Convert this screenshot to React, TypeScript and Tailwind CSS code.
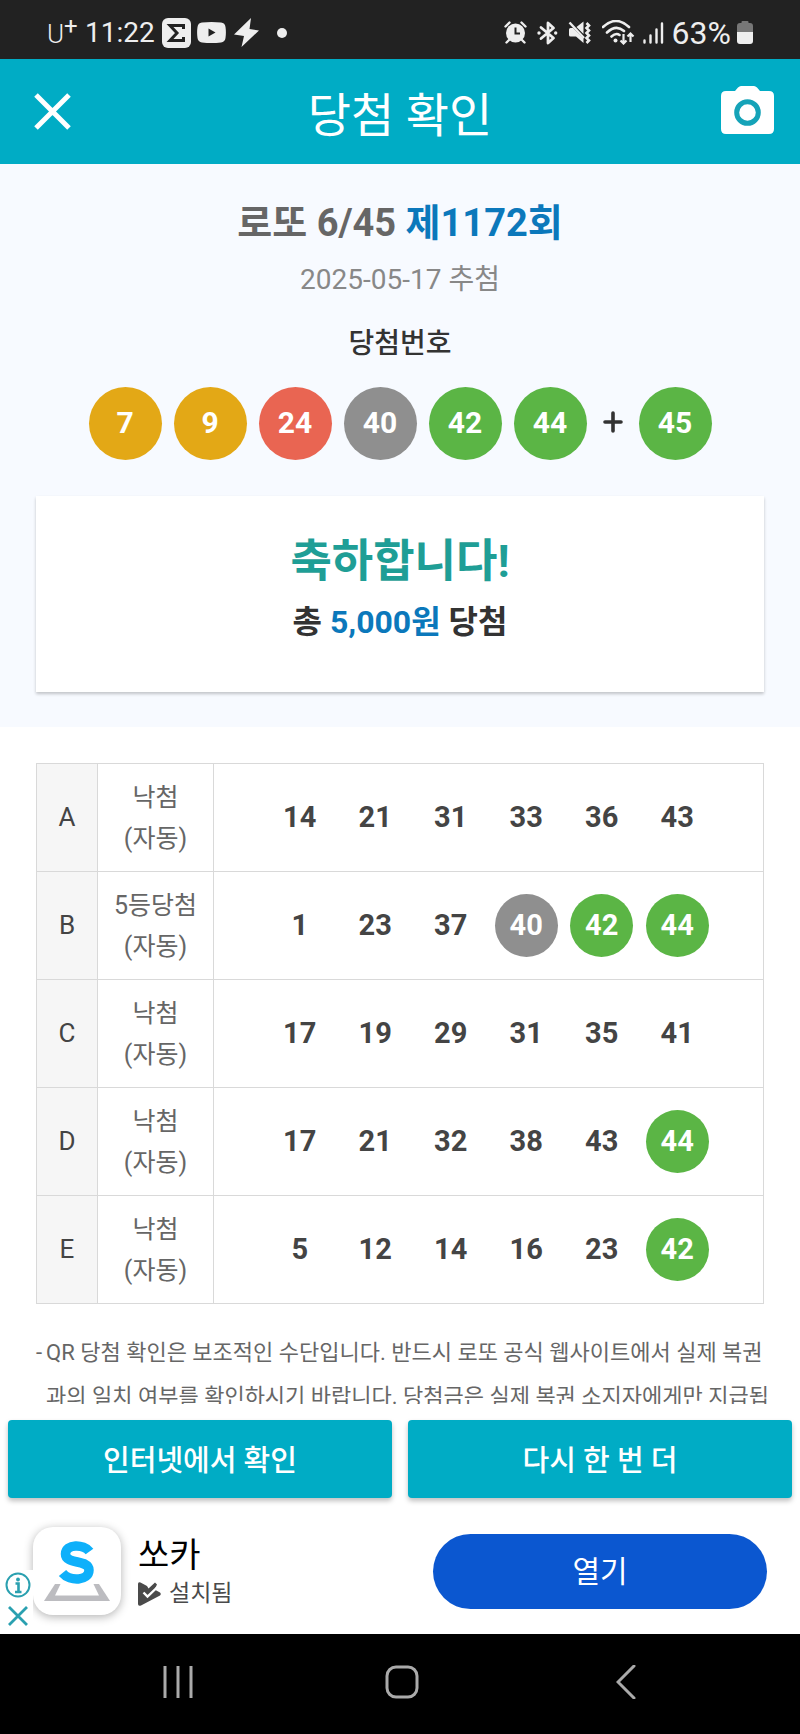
import React from "react";
import { clsx } from "clsx";

type BallColor = "yellow" | "red" | "gray" | "green";

const ballColors: Record<BallColor, string> = {
  yellow: "bg-[#e3a816]",
  red: "bg-[#e96552]",
  gray: "bg-[#8f8f8f]",
  green: "bg-[#5bb545]",
};

const colorOf = (n: number): BallColor => {
  if (n <= 10) return "yellow";
  if (n <= 30) return "red";
  if (n <= 40) return "gray";
  return "green";
};

const winning = [7, 9, 24, 40, 42, 44];
const bonus = 45;

interface Game {
  id: string;
  result: string;
  numbers: number[];
}

const games: Game[] = [
  { id: "A", result: "낙첨", numbers: [14, 21, 31, 33, 36, 43] },
  { id: "B", result: "5등당첨", numbers: [1, 23, 37, 40, 42, 44] },
  { id: "C", result: "낙첨", numbers: [17, 19, 29, 31, 35, 41] },
  { id: "D", result: "낙첨", numbers: [17, 21, 32, 38, 43, 44] },
  { id: "E", result: "낙첨", numbers: [5, 12, 14, 16, 23, 42] },
];

const StatusBar = () => (
  <div className="flex h-[59px] shrink-0 items-center justify-between bg-[#222222] pl-[47px] pr-[47px] pt-1.5 text-[#eeeeee]">
    <div className="flex items-center">
      <span className="flex w-[38px] pt-0.5 text-[26px] leading-8">
        <span className="font-light">U</span>
        <sup className="top-0 text-[24px] leading-4">+</sup>
      </span>
      <span className="w-[77px] text-[28px] leading-8">11:22</span>
      <svg width="29" height="30" viewBox="0 0 29 30">
        <rect width="29" height="30" rx="6" fill="#eeeeee" />
        <path
          d="M21.500 11V7.500H8L15 15L8 22.500H21.500V19"
          fill="none"
          stroke="#222222"
          strokeWidth="3"
        />
      </svg>
      <svg className="ml-1.5" width="29" height="21" viewBox="0 0 29 21">
        <path
          d="M5 .6Q14.500-.4 24 .6Q28 1 28.500 5Q29.300 10.500 28.500 16Q28 20 24 20.400Q14.500 21.400 5 20.400Q1 20 .5 16Q-.3 10.500 .5 5Q1 1 5 .6Z"
          fill="#eeeeee"
        />
        <path d="M11.500 6.500L18.500 10.500L11.500 14.500Z" fill="#222222" />
      </svg>
      <svg className="ml-2" width="25" height="29" viewBox="0 0 25 29">
        <path d="M17 0L0 16.500L10 18L7.500 29L25 12.500L15.500 11Z" fill="#eeeeee" />
      </svg>
      <span className="ml-[18px] size-[10px] rounded-full bg-[#eeeeee]" />
    </div>

    <div className="flex items-center">
      <svg width="23" height="23" viewBox="0 0 23 23">
        <circle cx="11.500" cy="12" r="9.500" fill="#eeeeee" />
        <path
          d="M1.500 5.500L5.500 1.500M21.500 5.500L17.500 1.500M5 19L2.500 21.500M18 19L20.500 21.500"
          stroke="#eeeeee"
          strokeWidth="2.400"
          strokeLinecap="round"
        />
        <path d="M11.500 6.500V12.500H16" fill="none" stroke="#222222" strokeWidth="2" />
      </svg>
      <svg className="ml-2.5" width="21" height="24" viewBox="0 0 21 24">
        <path
          d="M4 6.500L16.500 17L11 22V2L16.500 7L4 17.500"
          fill="none"
          stroke="#eeeeee"
          strokeWidth="2.800"
          strokeLinejoin="round"
          strokeLinecap="round"
        />
        <circle cx="2" cy="12" r="1.700" fill="#eeeeee" />
        <circle cx="18.700" cy="12" r="1.700" fill="#eeeeee" />
      </svg>
      <svg className="ml-2.5" width="24" height="23" viewBox="0 0 24 23">
        <path
          d="M1 8.500Q1 7 2.500 7H5L15.500 17.500V22L8 15.500H2.500Q1 15.500 1 14ZM8.500 6L15.500 .5V13Z"
          fill="#eeeeee"
        />
        <path d="M1.500 1.500L16 17" stroke="#eeeeee" strokeWidth="2.400" />
        <path
          d="M18.500 2L21 4.500L18.500 7L21 9.500L18.500 12L21 14.500L18.500 17L21 19.500L18.500 22"
          fill="none"
          stroke="#eeeeee"
          strokeWidth="2.600"
        />
      </svg>
      <svg className="ml-2.5" width="33" height="25" viewBox="0 0 33 25">
        <path
          d="M1 7Q14-5 27 7M5 12.500Q14 4 22 11M9.500 16.500Q14 12.500 17.500 15"
          fill="none"
          stroke="#eeeeee"
          strokeWidth="2.600"
          strokeLinecap="round"
        />
        <circle cx="13.500" cy="20.500" r="2" fill="#eeeeee" />
        <path
          d="M21.500 14V23M18.500 20.500L21.500 23.500L24.500 20.500M28.500 22V14M25.500 16.500L28.500 13.500L31.500 16.500"
          fill="none"
          stroke="#eeeeee"
          strokeWidth="2.200"
        />
      </svg>
      <svg className="ml-2" width="21" height="22" viewBox="0 0 21 22">
        <path
          d="M1.500 18.500V20.500M7.500 13.500V20.500M13.500 7.500V20.500M19 1.500V20.500"
          stroke="#eeeeee"
          strokeWidth="2.400"
          strokeLinecap="round"
        />
      </svg>
      <span className="ml-2 text-[32px] leading-8">63%</span>
      <svg className="ml-1.5" width="16" height="23" viewBox="0 0 16 23">
        <path
          d="M4.500 2V1Q4.500 0 5.500 0H10.500Q11.500 0 11.500 1V2H13Q16 2 16 5V11H0V5Q0 2 3 2Z"
          fill="#777777"
        />
        <path d="M0 11H16V20Q16 23 13 23H3Q0 23 0 20Z" fill="#eeeeee" />
      </svg>
    </div>
  </div>
);

const Header = () => (
  <header className="flex h-[105px] shrink-0 items-center justify-between bg-[#00acc5] px-[26px] text-white">
    <button type="button" aria-label="닫기" className="w-[53px] pl-2">
      <svg width="37" height="37" viewBox="0 0 37 37">
        <path d="M2 2L35 35M35 2L2 35" stroke="white" strokeWidth="5" />
      </svg>
    </button>
    <h1 className="pt-2 text-[47px] leading-[56px]">당첨 확인</h1>
    <button type="button" aria-label="카메라" className="pb-1">
      <svg width="53" height="48" viewBox="0 0 53 48">
        <path
          d="M5 5H14L17 1.500Q18.500 0 20 0H33Q34.500 0 36 1.500L39 5H48Q53 5 53 10V43Q53 48 48 48H5Q0 48 0 43V10Q0 5 5 5Z"
          fill="white"
        />
        <circle cx="26.500" cy="26.500" r="10.800" fill="none" stroke="#15a3b8" strokeWidth="5" />
      </svg>
    </button>
  </header>
);

const Ball = ({ value }: { value: number }) => (
  <span
    className={clsx(
      "flex size-[73px] items-center justify-center rounded-full pb-0.5 text-[30px] font-bold text-white",
      ballColors[colorOf(value)],
    )}
  >
    {value}
  </span>
);

const Summary = () => (
  <section className="bg-[#f7faff] px-9 pb-[35px] pt-[35px] text-center">
    <h2 className="text-[38px] font-bold leading-[48px] text-[#666666]">
      로또 6/45 <span className="text-[#0b78bb]">제1172회</span>
    </h2>
    <p className="mt-[13px] text-[28px] leading-10 text-[#888888]">2025-05-17 추첨</p>
    <p className="mt-6 text-[28px] font-medium leading-10 text-[#333333]">당첨번호</p>
    <div className="mt-[23px] flex items-center justify-center gap-3">
      {winning.map((n) => (
        <Ball key={n} value={n} />
      ))}
      <svg className="mx-1 mb-1" width="20" height="22" viewBox="0 0 20 22">
        <path
          d="M10 2V20M2 11H18"
          stroke="#333333"
          strokeWidth="3.600"
          strokeLinecap="round"
        />
      </svg>
      <Ball value={bonus} />
    </div>

    <div className="mt-9 bg-white pb-[50px] pt-[38px] shadow-[0_2px_3px_rgba(0,0,0,0.22)]">
      <p className="text-[45px] font-bold leading-[56px] text-[#1f9e96]">축하합니다!</p>
      <p className="mt-3 text-[32px] font-bold leading-10 text-[#333333]">
        총 <span className="text-[#0b78bb]">5,000원</span> 당첨
      </p>
    </div>
  </section>
);

const GameRow = ({ game }: { game: Game }) => {
  const drawn = [...winning, bonus];
  return (
    <tr className="h-[108px]">
      <th scope="row" className="border border-[#d9d9d9] bg-[#f6f6f6] text-[26px] font-normal text-[#444444]">
        {game.id}
      </th>
      <td className="border border-[#d9d9d9] text-[25px] leading-[41px] text-[#666666]">
        {game.result}
        <br />
        (자동)
      </td>
      <td className="border border-[#d9d9d9]">
        <div className="mx-auto grid max-w-[453px] grid-cols-6 place-items-center">
          {game.numbers.map((n) => (
            <span
              key={n}
              className={clsx(
                "flex size-[63px] items-center justify-center rounded-full text-[29px] font-bold",
                drawn.includes(n) ? ["text-white", ballColors[colorOf(n)]] : "text-[#444444]",
              )}
            >
              {n}
            </span>
          ))}
        </div>
      </td>
    </tr>
  );
};

const Actions = () => (
  <div className="grid shrink-0 grid-cols-2 gap-4 bg-white px-2 pt-4 text-[29px] font-medium text-white">
    <button type="button" className="h-[78px] rounded bg-[#00acc5] pt-1.5 shadow-[0_3px_5px_rgba(0,0,0,0.25)]">
      인터넷에서 확인
    </button>
    <button type="button" className="h-[78px] rounded bg-[#00acc5] pt-1.5 shadow-[0_3px_5px_rgba(0,0,0,0.25)]">
      다시 한 번 더
    </button>
  </div>
);

const AdBanner = () => (
  <aside className="relative flex h-[136px] shrink-0 items-center px-[33px] pt-2.5">
    <div className="flex size-[88px] shrink-0 items-center justify-center rounded-[20px] bg-white shadow-[0_2px_10px_rgba(0,0,0,0.3)]">
      <svg width="66" height="60" viewBox="0 0 66 60">
        <path d="M11 43H55L66 60H0Z" fill="#bcbcc0" />
        <path d="M17 42H49L55 54.500H11Z" fill="white" />
        <path
          d="M45.500 10.500C40 3 21.500 2.500 21.500 13C21.500 24 45 18 45 29C45 40 26 41 18.500 32"
          fill="none"
          stroke="#0eb0fa"
          strokeWidth="9.500"
        />
      </svg>
    </div>
    <div className="ml-[17px] flex-1 pt-1.5">
      <p className="text-[34px] leading-10 text-black">쏘카</p>
      <p className="flex items-center gap-2 text-[23px] leading-[38px] text-[#4a4a4a]">
        <svg width="23" height="24" viewBox="0 0 23 24">
          <path
            d="M0 2Q0-.5 2.500 .5L9 4L10.500 6.500L17 .5L19 2.500L16.500 7.500L22 10.500Q23.500 12 22 13.500L3 23.500Q0 24.500 0 22Z"
            fill="#4a4a4a"
          />
          <path
            d="M5.500 10.500L9.500 14.500L19 5.500"
            fill="none"
            stroke="white"
            strokeWidth="2.400"
          />
        </svg>
        설치됨
      </p>
    </div>
    <button type="button" className="h-[75px] w-[334px] rounded-full bg-[#0b57d0] text-[30px] text-white">
      열기
    </button>

    {/* ad choices, over the icon's shadow */}
    <div className="absolute bottom-1 left-0 flex w-[33px] flex-col items-center gap-2 bg-white pb-1 pl-0.5 pt-0.5">
      <button type="button" aria-label="광고 정보">
        <svg width="26" height="26" viewBox="0 0 26 26">
          <circle cx="13" cy="13" r="11.500" fill="none" stroke="#2aa0b0" strokeWidth="2" />
          <circle cx="13" cy="7.500" r="1.900" fill="#2aa0b0" />
          <path d="M10.500 11.500H13.500V20M10 20H16.500" fill="none" stroke="#2aa0b0" strokeWidth="2.600" />
        </svg>
      </button>
      <button type="button" aria-label="광고 닫기">
        <svg width="20" height="20" viewBox="0 0 20 20">
          <path d="M1 1L19 19M19 1L1 19" stroke="#2aa0b0" strokeWidth="2.800" />
        </svg>
      </button>
    </div>
  </aside>
);

const NavBar = () => (
  <nav className="grid h-[100px] shrink-0 grid-cols-3 place-items-center bg-black pb-1 pl-[66px] pr-[62px]">
    <button type="button" aria-label="최근 앱">
      <svg width="32" height="34" viewBox="0 0 32 34" stroke="#aaaaaa" strokeWidth="3">
        <path d="M3 1V33M16 1V33M29 1V33" />
      </svg>
    </button>
    <button type="button" aria-label="홈">
      <svg width="34" height="34" viewBox="0 0 34 34" fill="none" stroke="#aaaaaa" strokeWidth="3">
        <rect x="2" y="2" width="30" height="30" rx="9" />
      </svg>
    </button>
    <button type="button" aria-label="뒤로">
      <svg width="20" height="34" viewBox="0 0 20 34" fill="none" stroke="#aaaaaa" strokeWidth="3">
        <path d="M18 1L2 17L18 33" strokeLinecap="round" />
      </svg>
    </button>
  </nav>
);

export default function App() {
  return (
    <div className="flex h-screen flex-col bg-white font-[Roboto,'Noto_Sans_CJK_KR',sans-serif]" lang="ko">
      <StatusBar />
      <Header />
      <main className="min-h-0 flex-1 overflow-y-auto [scrollbar-width:none]">
        <Summary />
        <div className="px-9 pt-9">
          <table className="w-full table-fixed border-collapse text-center">
            <colgroup>
              <col className="w-[61px]" />
              <col className="w-[116px]" />
              <col />
            </colgroup>
            <tbody>
              {games.map((game) => (
                <GameRow key={game.id} game={game} />
              ))}
            </tbody>
          </table>
          <div className="mt-[27px] flex gap-1 text-[22px] leading-[44px] text-[#666666]">
            <span>-</span>
            <p className="whitespace-nowrap">
              QR 당첨 확인은 보조적인 수단입니다. 반드시 로또 공식 웹사이트에서 실제 복권
              <br />
              과의 일치 여부를 확인하시기 바랍니다. 당첨금은 실제 복권 소지자에게만 지급됩
            </p>
          </div>
        </div>
      </main>
      <Actions />
      <AdBanner />
      <NavBar />
    </div>
  );
}
